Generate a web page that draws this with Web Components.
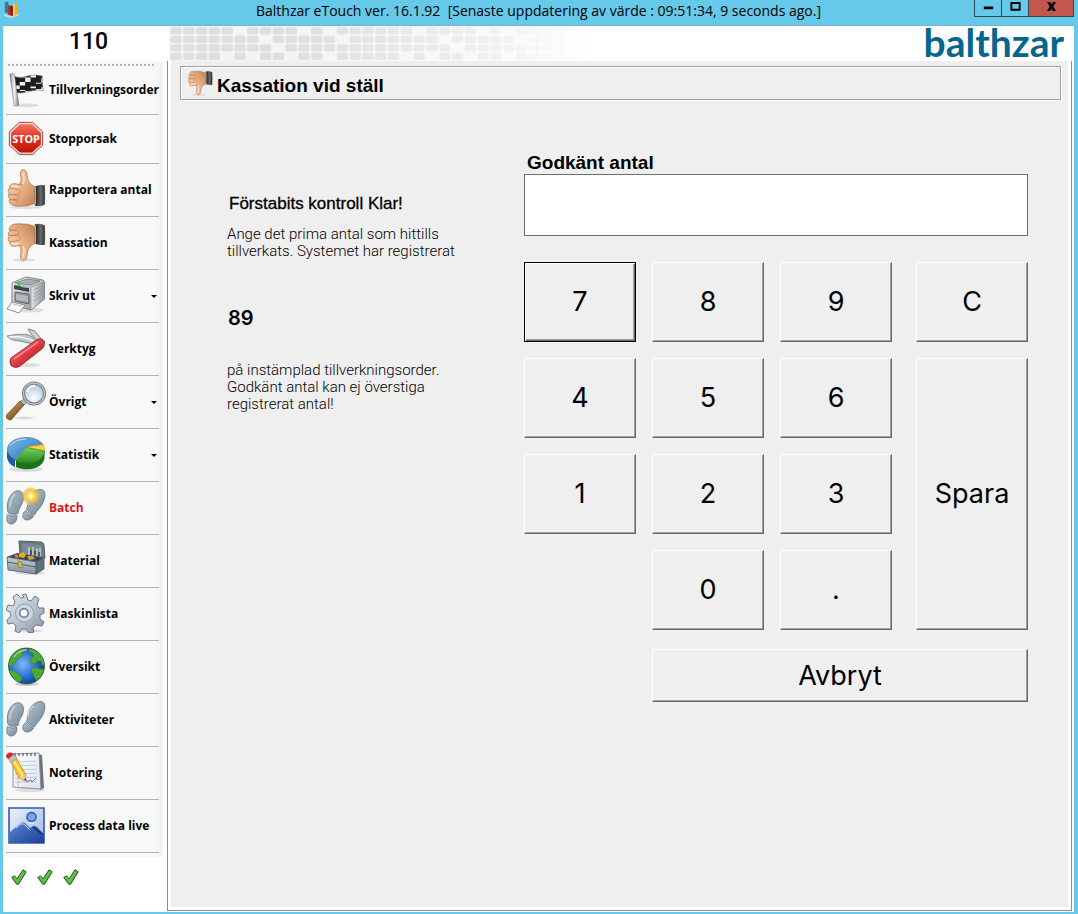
<!DOCTYPE html>
<html lang="sv">
<head>
<meta charset="utf-8">
<title>Balthzar eTouch</title>
<style>
  body {
    margin: 0;
    font-family: "Liberation Sans", Arial, sans-serif;
    color: #000;
  }
</style>
</head>
<body>
<et-window>
  <span slot="title">Balthzar eTouch ver. 16.1.92  [Senaste uppdatering av värde : 09:51:34, 9 seconds ago.]</span>

  <et-header slot="header" station="110">balthzar</et-header>

  <et-sidebar slot="sidebar">
    <et-nav-item icon="flag" compact>Tillverkningsorder</et-nav-item>
    <et-nav-item icon="stop" compact>Stopporsak</et-nav-item>
    <et-nav-item icon="thumb-up">Rapportera antal</et-nav-item>
    <et-nav-item icon="thumb-down">Kassation</et-nav-item>
    <et-nav-item icon="printer" menu>Skriv ut</et-nav-item>
    <et-nav-item icon="knife">Verktyg</et-nav-item>
    <et-nav-item icon="magnifier" menu>Övrigt</et-nav-item>
    <et-nav-item icon="pie" menu>Statistik</et-nav-item>
    <et-nav-item icon="steps-new" alert>Batch</et-nav-item>
    <et-nav-item icon="toolbox">Material</et-nav-item>
    <et-nav-item icon="gear">Maskinlista</et-nav-item>
    <et-nav-item icon="globe">Översikt</et-nav-item>
    <et-nav-item icon="steps">Aktiviteter</et-nav-item>
    <et-nav-item icon="note">Notering</et-nav-item>
    <et-nav-item icon="picture">Process data live</et-nav-item>
    <et-icon slot="status" name="check"></et-icon>
    <et-icon slot="status" name="check"></et-icon>
    <et-icon slot="status" name="check"></et-icon>
  </et-sidebar>

  <et-panel icon="thumb-down">
    <span slot="heading">Kassation vid ställ</span>
    <et-info slot="info" count="89">
      <span slot="status">Förstabits kontroll Klar!</span>
      <span slot="before">Ange det prima antal som hittills tillverkats. Systemet har registrerat</span>
      <span slot="after">på instämplad tillverkningsorder. Godkänt antal kan ej överstiga registrerat antal!</span>
    </et-info>
    <et-keypad>Godkänt antal</et-keypad>
  </et-panel>
</et-window>

<script>
const hand = `
  <defs>
    <linearGradient id="skin" x1="0" y1="0" x2="1" y2="1"><stop offset="0" stop-color="#fddcbd"/><stop offset=".5" stop-color="#ebb48a"/><stop offset="1" stop-color="#c08050"/></linearGradient>
    <linearGradient id="cuff" x1="0" y1="0" x2="1" y2="0"><stop offset="0" stop-color="#1c1c1c"/><stop offset=".6" stop-color="#6c6c6c"/><stop offset="1" stop-color="#2c2c2c"/></linearGradient>
  </defs>
  <path d="M29 17.500q5-1.500 9.500-1 .5 9 0 19-4 2-9.500 1z" fill="url(#cuff)" stroke="#333" stroke-width=".6"/>
  <path d="M29 17.500v18" stroke="#e4e4e4" stroke-width="1.400"/>
  <path d="M13 15.500C16.500 12 14.500 8 14.500 4c0-4 4.500-4.500 6-1 1.200 4 .5 7 2.500 10 1.500 2.500 3 3 5.500 4.500v17c-4 1.500-6 2.500-12 2.500-6 .5-11.500 0-12.500-3-1-1.500-1.200-3 0-4.200-2-1.300-2.200-3.800-.8-5.300-1.700-2-1.200-4.500.8-5.500-.8-3.200 1.500-4.300 4-4.300 2-.1 3.500.300 5 .8z" fill="url(#skin)" stroke="#a06a45" stroke-width=".7"/>
  <path d="M4 19.500q5 .2 8.500 1 3 1 1.500 3.500-1 1.700-3.500 1.500H3m0 0 8 .5q2.500.5 2 2.700-.5 1.800-2.500 1.800H4m.5.300 5.500.5q2 .7 1.500 3.200M13 15.500q3.500 1.500 5.500-1.500" fill="none" stroke="#b57f57" stroke-width=".7"/>
  <path d="M17 4.500q2 6 0 11M6 17.500q4-1 7 .5" fill="none" stroke="#fff3e4" stroke-width="1.400" opacity=".8"/>`;

const sole = `
  <defs><linearGradient id="sole" x1="0" y1="0" x2="1" y2="1"><stop offset="0" stop-color="#b4c3cf"/><stop offset="1" stop-color="#748896"/></linearGradient></defs>
  <g fill="url(#sole)" stroke="#627380" stroke-width=".8">
    <path d="M9 4.500c5-2.500 9 1 8.500 7-.5 6-5 8.500-5.500 15-3.500 1.500-7.500 1-10-1C0 19 2 8 9 4.500z"/>
    <path d="M1.500 27.500q5 2.500 9.500 1c0 5-2 8.500-6 8.500-4-.2-5-4.500-3.500-9.500z"/>
    <path d="M38 4c2.500 5-1 13-4 16.500-2 2.500-4 4.500-5.500 7.500-3-.5-6-2.500-8-5.500 2-4.500.5-8 3.500-13C28 3 35 .500 38 4z"/>
    <path d="M19.500 23.500q3.500 4.500 8 5.500c-1.500 3-5.500 5-8.500 3.500-3.500-2-2.500-6 .5-9z"/>
  </g>
  <path d="M4 20q0-8 5-13M22 18q0-8 6-11" stroke="#dae2e8" stroke-width="1.200" fill="none" opacity=".8"/>`;

// All artwork is drawn on a 40x40 grid
const ICONS = {
  "app": `
    <path d="M3 31 17 37 35 30 34 34 18 40 3 35z" fill="#e9e4e1"/>
    <path d="M4 4h8v26l-8-3z" fill="#2b7f9f"/><path d="M11 12h9v23l-9-3z" fill="#b92e22"/><path d="M17 14h5v22l-5-3z" fill="#82180f"/>
    <path d="M23 8h9v25l-9 4z" fill="#f7a823"/><path d="M23 8h3v28l-3 1z" fill="#ffd978"/>`,
  "flag": `
    <ellipse cx="19" cy="37" rx="15" ry="2" fill="#ddd"/>
    <defs>
      <clipPath id="cloth"><path d="M7 4.500c8 5 17-4 31 0 0 5 .5 11 1 16.500-10-4-21 5-30 1.500z"/></clipPath>
      <linearGradient id="pole"><stop offset="0" stop-color="#808a90"/><stop offset=".5" stop-color="#f4f7f8"/><stop offset="1" stop-color="#6b757b"/></linearGradient>
    </defs>
    <g clip-path="url(#cloth)">
      <path d="M0 0h40v26H0z" fill="#f1f1f1"/>
      <path d="M7 2h6v8H7zm12 4h6v-5h-6zm12-4h8v5h-8zM13 11h6v-5h-6zm12-5h6v5h-6zM8 10h5v5H8zm11 1h6v5h-6zm12-4h6v5h-6zM13 15h6v5h-6zm12-4h6v5h-6zm12 1h3v5h-3zM8 19h5v5H8zm11-3h6v5h-6zm12-3h6v6h-6zM25 18h6v4h-6zM13 21h6v4h-6z" fill="#1e1e1e"/>
    </g>
    <path d="M7 4.500c8 5 17-4 31 0 0 5 .5 11 1 16.500-10-4-21 5-30 1.500z" fill="none" stroke="#777" stroke-width=".7"/>
    <path d="M2 2.500q2-1.500 5 0l5 34q-2 2.500-5 .5z" fill="url(#pole)" stroke="#667076" stroke-width=".6"/>`,
  "stop": `
    <defs><linearGradient id="red" x2="0" y2="1"><stop offset="0" stop-color="#f3705f"/><stop offset=".5" stop-color="#e2311f"/><stop offset="1" stop-color="#b81508"/></linearGradient></defs>
    <ellipse cx="20" cy="37" rx="13" ry="1.500" fill="#ddd"/>
    <path d="M12.500 1.500h15L38.500 12v15L27.500 37h-15L1.500 27V12z" fill="#f0dedb" stroke="#a83226" stroke-width="1"/>
    <path d="M13.300 3.500h13.400L36.500 13v13L26.700 35H13.300L3.500 26V13z" fill="url(#red)"/>
    <text x="20" y="24" text-anchor="middle" font-family="Open Sans" font-size="12" font-weight="700" fill="#fff">STOP</text>`,
  "thumb-up": `<ellipse cx="20" cy="38.500" rx="16" ry="1.500" fill="#ddd"/>${hand}`,
  "thumb-down": `<ellipse cx="18" cy="38" rx="12" ry="1.500" fill="#ddd"/><g transform="matrix(1 0 0 -1 0 39)">${hand}</g>`,
  "printer": `
    <defs>
      <linearGradient id="body" x2="1" y2="1"><stop offset="0" stop-color="#f6f7f8"/><stop offset="1" stop-color="#868c90"/></linearGradient>
      <linearGradient id="side"><stop offset="0" stop-color="#e2e5e7"/><stop offset="1" stop-color="#90979c"/></linearGradient>
    </defs>
    <ellipse cx="24" cy="35" rx="14" ry="2.500" fill="#ddd"/>
    <path d="M6 8 20 2l17 3q1.500 1 1.500 3v16L25 35 6 30z" fill="url(#body)" stroke="#70777b" stroke-width=".9"/>
    <path d="M25 12 38.500 7v17L25 35z" fill="url(#side)" stroke="#81888c" stroke-width=".6"/>
    <path d="m28 15 8-4m-8 8 8-5m-8 8 8-5m-8 9 8-6" stroke="#8a9297" stroke-width=".8"/>
    <path d="M9 8 21 4l13 2-10 4z" fill="#a8afb3" stroke="#666" stroke-width=".6"/>
    <path d="m8 10 15 3v4L8 14z" fill="#39444b"/><circle cx="13" cy="9" r="2" fill="#49d13e"/><path d="m15 10 6 1v2l-6-1z" fill="#7ec4e0"/>
    <path d="m9 17 14 2v10L9 26z" fill="#8d9498" stroke="#555" stroke-width=".8"/><path d="m10 19 12 2v6l-12-2z" fill="#b3b9bc"/>
    <path d="m6 27 13 3-6 8L1 34z" fill="#fafafa" stroke="#70777b" stroke-width=".8"/><path d="m7 29 9 2" stroke="#bbc0c3"/>`,
  "knife": `
    <defs><linearGradient id="grip" x1="0" y1="0" x2="1" y2="1"><stop offset=".1" stop-color="#ff8c8c"/><stop offset=".5" stop-color="#e23942"/><stop offset="1" stop-color="#a01822"/></linearGradient></defs>
    <ellipse cx="20" cy="37" rx="14" ry="2" fill="#ddd"/>
    <path d="M1 8q14-3 22-1l10 6-4 3q-9-1-15-3Q5 13 1 8z" fill="#bcc5ca" stroke="#717b81" stroke-width=".8"/>
    <path d="M3 9q14-1 24 4" stroke="#f4f6f7" stroke-width="1.500" fill="none"/>
    <path d="m22 1 7 2 7 9-4 2-7-8z" fill="#c9d0d4" stroke="#717b81" stroke-width=".9"/>
    <path d="M5 30 31 11.500q5-2 7.500 2 .5 4-2 7L14 38q-4 3-8.500 0-3-4-.5-8z" fill="url(#grip)" stroke="#8f1720" stroke-width=".8"/>
    <path d="M8 31 32 14" stroke="#ffb5b5" stroke-width="1.500" opacity=".7"/>`,
  "magnifier": `
    <defs>
      <radialGradient id="lens" cx=".5" cy=".7" r=".7"><stop offset="0" stop-color="#fbfdff"/><stop offset="1" stop-color="#a6c3dc"/></radialGradient>
      <linearGradient id="wood" x2=".7" y2="1"><stop offset="0" stop-color="#d9a86a"/><stop offset="1" stop-color="#6f4318"/></linearGradient>
    </defs>
    <ellipse cx="18" cy="37" rx="10" ry="1.500" fill="#ddd"/>
    <path d="m18 18 3 3-5 5-4-4z" fill="#b4bcc2" stroke="#666" stroke-width=".7"/>
    <path d="m14 20 4 4L5 39q-3 0-4.500-2v-3z" fill="url(#wood)" stroke="#6f4318" stroke-width=".7"/>
    <circle cx="28" cy="12.500" r="10.500" fill="url(#lens)" stroke="#6d777e" stroke-width="3"/>
    <circle cx="28" cy="12.500" r="10.500" fill="none" stroke="#b9c1c6" stroke-width="1.300"/>
    <path d="M21 11q1-6 8-6" stroke="#fff" stroke-width="2" fill="none"/>`,
  "pie": `
    <defs>
      <linearGradient id="blue" x2="1" y2="1"><stop offset="0" stop-color="#7dbbea"/><stop offset="1" stop-color="#1f6fb8"/></linearGradient>
      <linearGradient id="green" x2="0" y2="1"><stop offset="0" stop-color="#76cf5a"/><stop offset="1" stop-color="#278a1f"/></linearGradient>
    </defs>
    <ellipse cx="20" cy="35" rx="17" ry="3" fill="#ddd"/>
    <path d="M1 17v7q2 7 8 9v-8z" fill="#1d5c9e"/><path d="M10 26v7c10 5 27 2 28.500-9v-7z" fill="#1d7418"/>
    <path d="M19.500 13 9 26C-4 19 0 4 20 3.500c8 0 15 3 17.500 8z" fill="url(#blue)" stroke="#2b679c" stroke-width=".6"/>
    <path d="M20 13 37 10.500q2 3 1.500 6.500z" fill="#ffd337" stroke="#d69410" stroke-width=".6"/>
    <path d="M20 13.500 38.500 17C38 29 20 32 9.500 26.500z" fill="url(#green)" stroke="#237a1c" stroke-width=".6"/>
    <path d="M4 12Q9 5 20 5" stroke="#bfe0f6" fill="none"/>`,
  "steps": sole,
  "steps-new": `${sole}
    <defs><radialGradient id="glow"><stop offset="0" stop-color="#fff"/><stop offset=".25" stop-color="#ffe36a"/><stop offset=".7" stop-color="#fcb92a" stop-opacity=".8"/><stop offset="1" stop-color="#fcb92a" stop-opacity="0"/></radialGradient></defs>
    <circle cx="25" cy="9" r="9.500" fill="url(#glow)"/>
    <path d="m25 5 1 3 3 1-3 1-1 3-1-3-3-1 3-1z" fill="#fffbe0"/>`,
  "toolbox": `
    <defs><linearGradient id="steel" x2="0" y2="1"><stop offset="0" stop-color="#c6d0d7"/><stop offset="1" stop-color="#7c8f9c"/></linearGradient></defs>
    <ellipse cx="24" cy="33" rx="15" ry="2" fill="#ddd"/>
    <path d="m13 1 22 1q3 1 3 3l1 13-5 1-20-4z" fill="#6c7c87" stroke="#44515a" stroke-width=".9"/>
    <path d="m16 4 19 1 1 11-19-2z" fill="#7c8a94"/>
    <path d="M23 7v8m4-8v8m4-7v8m3-8v8" stroke="#dde4e8" stroke-width="1.200"/><path d="M25 10v5m4-4v4m4-3v4" stroke="#37302e" stroke-width="1.300"/>
    <path d="m1 17 10-4 27 5-7 4z" fill="#3b444a"/>
    <path d="m13 14 4-2 3 3-2 3-5-1z" fill="#f2a81d"/><path d="m21 16 6 0 2 3-6 1z" fill="#c8a04a"/><path d="m8 15 3-1 2 3-3 1z" fill="#b98a3a"/>
    <path d="m1 17 29 5v12L2 30z" fill="url(#steel)" stroke="#4d5d68" stroke-width=".8"/><path d="m30 22 8-4v11l-8 5z" fill="#5e707c" stroke="#4d5d68" stroke-width=".8"/>
    <path d="m1 22 29 5" stroke="#56656f"/><path d="m12 21 4 1v6l-4-1z" fill="#d5b547" stroke="#7f6925" stroke-width=".6"/>`,
  "gear": `
    <defs><linearGradient id="cog" x2="1" y2="1"><stop offset="0" stop-color="#e2e9ef"/><stop offset=".6" stop-color="#b0bdc9"/><stop offset="1" stop-color="#8593a0"/></linearGradient></defs>
    <ellipse cx="23" cy="38" rx="14" ry="1.500" fill="#ddd"/>
    <path d="m16 2 4-1 2 6 3 1 4-5 4 3-2 6 2 3 5 0 0 5-4 2 0 4 4 3-2 4-6-1-3 3 1 4-5 1-3-4-4 0-3 4-4-2 1-5-3-3-5 1-1-4 4-4-1-4-4-2 2-5 5 1 2-4-2-5 4-3 4 4 3-1z" fill="url(#cog)" stroke="#6a7987" stroke-width="1" stroke-linejoin="round"/>
    <circle cx="18.500" cy="20" r="9" fill="#cdd6df" stroke="#93a1ae"/><circle cx="18" cy="20" r="4.200" fill="#f8f8f8" stroke="#6a7987" stroke-width="1.500"/>`,
  "globe": `
    <defs>
      <radialGradient id="sea" cx=".4" cy=".45" r=".6"><stop offset="0" stop-color="#7fb9f5"/><stop offset=".6" stop-color="#2b70cf"/><stop offset="1" stop-color="#123f87"/></radialGradient>
      <clipPath id="disc"><circle cx="20.500" cy="20" r="18"/></clipPath>
    </defs>
    <ellipse cx="21" cy="38" rx="12" ry="2" fill="#ccc"/>
    <circle cx="20.500" cy="20" r="18" fill="url(#sea)"/>
    <g clip-path="url(#disc)" fill="#4cab35" stroke="#2f7f2b" stroke-width=".5">
      <path d="M3 10Q8 3 17 2l4 2-5 2 1 4-5 2-2 4-3 1-1 4-4-2-3-5z"/>
      <path d="m24 2 8 2 7 8 1 8-4-1-1-4-4 0-2 3-4-1-1-4 4-3-2-3-4-1z"/>
      <path d="m3 24 5 1 6 4 2 4-3 4-5-1-5-5zm22-1 5-2 4 2 4 0-2 8-5 4-3-4z"/>
    </g>
    <circle cx="20.500" cy="20" r="18" fill="none" stroke="#25602f" stroke-width=".8"/>
    <path d="M8 11Q13 4 21 4" stroke="#cfe6ff" stroke-width="1.500" fill="none" opacity=".6"/>`,
  "note": `
    <defs><linearGradient id="paper" x2="1" y2="1"><stop offset="0" stop-color="#fff"/><stop offset="1" stop-color="#dbe3ec"/></linearGradient></defs>
    <ellipse cx="24" cy="38" rx="15" ry="2" fill="#ddd"/>
    <path d="m32 2 4 1 2 33-4 2z" fill="#69747c"/><path d="m7 2 26-1 2 36-28-2z" fill="url(#paper)" stroke="#7d878e" stroke-width=".9"/>
    <path d="M9 1v3m4-3v3m4-3v3m4-3v3m4-3v3m4-3v3" stroke="#555" stroke-width="1.200"/>
    <path d="m9 10 22-1M9 14l22-1M9 18l22-1M9 22l22-1M9 26l22-1M9 30l22 0" stroke="#a9c1df" stroke-width=".8"/><path d="M12 7v27" stroke="#e99" stroke-width=".7"/>
    <path d="m5 10 5-4 10 17-1 6-6-3z" fill="#ffc629" stroke="#b37a08" stroke-width=".7"/><path d="m8 9 9 15" stroke="#fff0a0" stroke-width="1.500"/>
    <path d="m13 26 6-4 1 7z" fill="#edc9a0"/><path d="m18 27 2.500 2.500-.5-3z" fill="#222"/>
    <path d="m2 6 5-4 4 4-6 5z" fill="#b8bec2" stroke="#777" stroke-width=".5"/><path d="M0 4q1-4 5-3.500 2 .5 2.500 2L2.500 7Q0 6.500 0 4z" fill="#d9262b"/><path d="m20 30 5-2 1 2 4-4" stroke="#777" fill="none"/>`,
  "picture": `
    <defs><linearGradient id="sky" x2="1" y2="1"><stop offset="0" stop-color="#edf3fc"/><stop offset="1" stop-color="#9ab7e6"/></linearGradient>
    <linearGradient id="hill" x2="1" y2="1"><stop offset="0" stop-color="#5b83d0"/><stop offset="1" stop-color="#1a3f98"/></linearGradient></defs>
    <path d="M3 3h35v35H3z" fill="url(#sky)" stroke="#3158ab" stroke-width="1.600"/>
    <path d="M4 27 15 18q2-1.500 4 0l5 5 3-2q2-1 4 1l7 7v9H4z" fill="url(#hill)"/>
    <path d="m10 23 5-4q2-1 4 1l5 5" fill="none" stroke="#c8d8f4" stroke-width="1"/><path d="m27 22 9 7" stroke="#1b2c55" stroke-width="1.500"/>
    <circle cx="25.500" cy="12" r="4.500" fill="#7fa6e4" stroke="#3b66be" stroke-width="1.800"/><path d="M23 18h5" stroke="#fff"/>`,
  "check": `
    <path d="m2 21 7-4 6 8L30 2l8 5-19 31h-5z" fill="#5cb947" stroke="#1f5a1a" stroke-width="2.500" stroke-linejoin="round"/>
    <path d="m7 21 3-1 6 9L32 7" fill="none" stroke="#6fc859" stroke-width="2"/>`,
  "minimize": `<path d="M3 20h34v10H3z"/>`,
  "maximize": `<path d="M5 7h30v25H5z" fill="none" stroke="#000" stroke-width="7"/>`,
  "close": `<path d="M4 4h11l5 9 5-9h11L26.500 20 36 36H25l-5-9-5 9H4l9.500-16z"/>`
};

class EtIcon extends HTMLElement {
  static get observedAttributes() {
    return ["name"];
  }

  constructor() {
    super();
    this.attachShadow({ mode: "open" });
  }

  attributeChangedCallback() {
    this.render();
  }

  render() {
    this.shadowRoot.innerHTML = `
      <style>
        :host { display: block; flex: none; width: 40px; height: 40px; }
        svg { display: block; width: 100%; height: 100%; }
      </style>
      <svg viewBox="0 0 40 40" aria-hidden="true">${ICONS[this.getAttribute("name")] || ""}</svg>`;
  }
}

class EtWindow extends HTMLElement {
  constructor() {
    super();
    this.attachShadow({ mode: "open" }).innerHTML = `
      <style>
        :host {
          display: flex;
          flex-direction: column;
          box-sizing: border-box;
          min-height: 100vh;
          padding: 0 4px 2px 3px;
          background: #66c9ea;
        }
        .titlebar {
          display: grid;
          grid-template-columns: 1fr auto 1fr;
          height: 25px;
          border-bottom: 1px solid #6fb5cf;
          font: 14px/22px "Open Sans", sans-serif;
        }
        .titlebar > et-icon { width: 18px; height: 18px; }
        ::slotted([slot="title"]) { white-space: pre; }
        .controls { display: flex; justify-content: flex-end; align-items: flex-start; }
        button {
          display: flex;
          justify-content: center;
          align-items: center;
          box-sizing: border-box;
          width: 27px;
          height: 17px;
          padding: 0 0 4px;
          border: 1px solid #2c4b57;
          border-top: 0;
          border-right: 0;
          background: none;
        }
        button et-icon { width: 11px; height: 11px; }
        .close { width: 46px; border-right: 1px solid #2c4b57; background: #c2574f; }
        .body { flex: 1; display: flex; flex-direction: column; background: #fff; }
        .columns { flex: 1; display: grid; grid-template-columns: 164px 1fr; }
      </style>
      <div class="titlebar">
        <et-icon name="app"></et-icon>
        <slot name="title"></slot>
        <div class="controls">
          <button aria-label="Minimera"><et-icon name="minimize"></et-icon></button>
          <button aria-label="Maximera"><et-icon name="maximize"></et-icon></button>
          <button class="close" aria-label="Stäng"><et-icon name="close"></et-icon></button>
        </div>
      </div>
      <div class="body">
        <slot name="header"></slot>
        <div class="columns">
          <slot name="sidebar"></slot>
          <slot></slot>
        </div>
      </div>`;
  }
}

// "#" is a tile, "." is a gap
const TILES = [
  "#####.####.#.######.####.#.######",
  "#######.#####.#######.#####.#####",
  "########.#############.##########",
  "####.#.##.##.#####.#.##.##.######"
];

class EtHeader extends HTMLElement {
  connectedCallback() {
    this.attachShadow({ mode: "open" }).innerHTML = `
      <style>
        :host { display: flex; height: 35px; }
        .station {
          width: 161px;
          padding-left: 5px;
          text-align: center;
          font: 500 23px/31px Roboto, sans-serif;
        }
        svg { flex: none; width: 424px; height: 35px; }
        .logo {
          margin-left: auto;
          padding-right: 10px;
          font: 700 39px/32px Lato, sans-serif;
          color: #07668c;
        }
      </style>
      <div class="station">${this.getAttribute("station")}</div>
      <svg viewBox="0 0 424 35" aria-hidden="true">${this.pattern()}</svg>
      <div class="logo"><slot></slot></div>`;
  }

  pattern() {
    const tiles = TILES.map((row, y) =>
      [...row].map((tile, x) => tile === "#"
        ? `<rect x="${x * 12.8 + 1.3}" y="${y * 8.5 + 1.2}" width="11.400" height="7.300" rx="2.500"/>`
        : "").join("")
    ).join("");
    return `
      <defs>
        <linearGradient id="fade">
          <stop offset=".3" stop-color="#fff"/><stop offset=".75" stop-color="#777"/><stop offset="1" stop-color="#000"/>
        </linearGradient>
        <mask id="m"><rect width="424" height="35" fill="url(#fade)"/></mask>
      </defs>
      <g mask="url(#m)"><rect width="424" height="35" fill="#f4f4f4"/><g fill="#dfdfdf">${tiles}</g></g>`;
  }
}

class EtSidebar extends HTMLElement {
  constructor() {
    super();
    this.attachShadow({ mode: "open" }).innerHTML = `
      <style>
        :host { display: block; }
        nav {
          margin-right: 4px;
          padding: 3px 4px 4px 3px;
          border-radius: 0 4px 4px 0;
          background: linear-gradient(to left, #f1f1f1, #f8f8f8 8px);
        }
        .grip {
          height: 2px;
          margin: 0 5px 0 2px;
          background: repeating-linear-gradient(to right, #b8b8b8 0 2px, transparent 2px 4px);
        }
        .status { display: flex; gap: 10px; padding: 12px 8px; }
        ::slotted([slot="status"]) { width: 16px; height: 16px; }
      </style>
      <nav>
        <div class="grip"></div>
        <slot></slot>
      </nav>
      <div class="status"><slot name="status"></slot></div>`;
  }
}

class EtNavItem extends HTMLElement {
  connectedCallback() {
    this.attachShadow({ mode: "open" }).innerHTML = `
      <style>
        :host { display: block; }
        button {
          display: flex;
          align-items: center;
          gap: 3px;
          box-sizing: border-box;
          width: 100%;
          height: 53px;
          padding: 0;
          border: 0;
          border-bottom: 1px solid #b4b4b4;
          background: none;
          color: inherit;
          font: 700 12px/16px "Open Sans", sans-serif;
          white-space: nowrap;
        }
        et-icon { margin-bottom: 2px; }
        :host([compact]) button { height: 49px; }
        :host([compact]) et-icon { height: 36px; margin-bottom: 0; }
        :host([alert]) { color: #d81818; }
        .arrow {
          display: none;
          margin: 0 2px 0 auto;
          border: 3px solid transparent;
          border-top-color: currentColor;
          border-bottom: 0;
        }
        :host([menu]) .arrow { display: block; }
      </style>
      <button>
        <et-icon name="${this.getAttribute("icon")}"></et-icon>
        <slot></slot>
        <span class="arrow"></span>
      </button>`;
  }
}

class EtPanel extends HTMLElement {
  connectedCallback() {
    this.attachShadow({ mode: "open" }).innerHTML = `
      <style>
        :host {
          display: block;
          margin: 0 2px 1px 0;
          padding: 0 3px 3px;
          border: 1px solid #8c8c8c;
          border-top: 0;
        }
        .surface { box-sizing: border-box; height: 100%; padding: 5px 7px 0 9px; background: #efefef; }
        header {
          display: flex;
          align-items: center;
          gap: 4px;
          height: 32px;
          padding-left: 6px;
          border: 1px solid #a0a0a0;
          box-shadow: 1px 1px #fff, inset 1px 1px #fff;
        }
        header et-icon { width: 26px; height: 26px; }
        h1 { margin: 0; padding-top: 6px; font: 700 19px/24px "Liberation Sans", sans-serif; }
        .content { display: flex; justify-content: space-between; padding: 50px 33px 0 47px; }
      </style>
      <div class="surface">
        <header>
          <et-icon name="${this.getAttribute("icon")}"></et-icon>
          <h1><slot name="heading"></slot></h1>
        </header>
        <div class="content">
          <slot name="info"></slot>
          <slot></slot>
        </div>
      </div>`;
  }
}

class EtInfo extends HTMLElement {
  connectedCallback() {
    this.attachShadow({ mode: "open" }).innerHTML = `
      <style>
        :host { display: block; width: 240px; padding-top: 44px; }
        h2 { margin: 0 0 12px 2px; font: 17px/20px "Liberation Sans", sans-serif; -webkit-text-stroke: 0.3px; }
        p { margin: 0; font: 300 15px/17px Roboto, sans-serif; }
        strong { display: block; margin: 46px 0 32px 1px; font: 600 20px/24px Inter, sans-serif; }
      </style>
      <h2><slot name="status"></slot></h2>
      <p><slot name="before"></slot></p>
      <strong>${this.getAttribute("count")}</strong>
      <p><slot name="after"></slot></p>`;
  }
}

class EtKey extends HTMLElement {
  constructor() {
    super();
    this.attachShadow({ mode: "open" }).innerHTML = `
      <style>
        :host { display: block; height: 80px; }
        button {
          width: 100%;
          height: 100%;
          padding: 0;
          border: 1px solid #696969;
          border-top-color: #fff;
          border-left-color: #fff;
          background: #efefef;
          box-shadow: inset -1px -1px #a0a0a0;
          color: #000;
          font: 27px/32px Inter, sans-serif;
        }
        :host([default]) button {
          border-color: #000;
          box-shadow: inset 1px 1px #fff, inset -1px -1px #696969, inset -2px -2px #a0a0a0;
        }
      </style>
      <button><slot></slot></button>`;
    this.shadowRoot.querySelector("button").addEventListener("click", () => {
      this.dispatchEvent(new CustomEvent("key-press", { bubbles: true, detail: this.textContent }));
    });
  }
}

class EtKeypad extends HTMLElement {
  constructor() {
    super();
    this.attachShadow({ mode: "open" }).innerHTML = `
      <style>
        :host { display: block; width: 504px; }
        label { display: block; padding: 1px 0 0 3px; font: 700 19px/23px "Liberation Sans", sans-serif; }
        input {
          display: block;
          box-sizing: border-box;
          width: 100%;
          height: 62px;
          padding: 0 8px;
          border: 1px solid #6e6e6e;
          background: #fff;
          font: 36px Inter, sans-serif;
        }
        .keys { display: grid; grid-template-columns: 1fr 112px; gap: 24px; margin-top: 26px; }
        .digits { display: grid; grid-template-columns: repeat(3, 1fr); gap: 16px; }
        .zero { grid-column: 2; }
        .actions { display: flex; flex-direction: column; gap: 16px; }
        .save { flex: 1; }
        .cancel { height: 53px; margin: 19px 0 0 128px; }
      </style>
      <label for="amount"><slot></slot></label>
      <input id="amount" inputmode="decimal">
      <div class="keys">
        <div class="digits">
          <et-key default>7</et-key><et-key>8</et-key><et-key>9</et-key>
          <et-key>4</et-key><et-key>5</et-key><et-key>6</et-key>
          <et-key>1</et-key><et-key>2</et-key><et-key>3</et-key>
          <et-key class="zero">0</et-key><et-key>.</et-key>
        </div>
        <div class="actions">
          <et-key>C</et-key>
          <et-key class="save">Spara</et-key>
        </div>
      </div>
      <et-key class="cancel">Avbryt</et-key>`;
    this.shadowRoot.addEventListener("key-press", (event) => this.press(event.detail));
  }

  press(key) {
    const input = this.shadowRoot.querySelector("input");
    if (key === "C") input.value = "";
    else if (key.length === 1) input.value += key;
  }
}

customElements.define("et-icon", EtIcon);
customElements.define("et-window", EtWindow);
customElements.define("et-header", EtHeader);
customElements.define("et-sidebar", EtSidebar);
customElements.define("et-nav-item", EtNavItem);
customElements.define("et-panel", EtPanel);
customElements.define("et-info", EtInfo);
customElements.define("et-key", EtKey);
customElements.define("et-keypad", EtKeypad);
</script>
</body>
</html>
